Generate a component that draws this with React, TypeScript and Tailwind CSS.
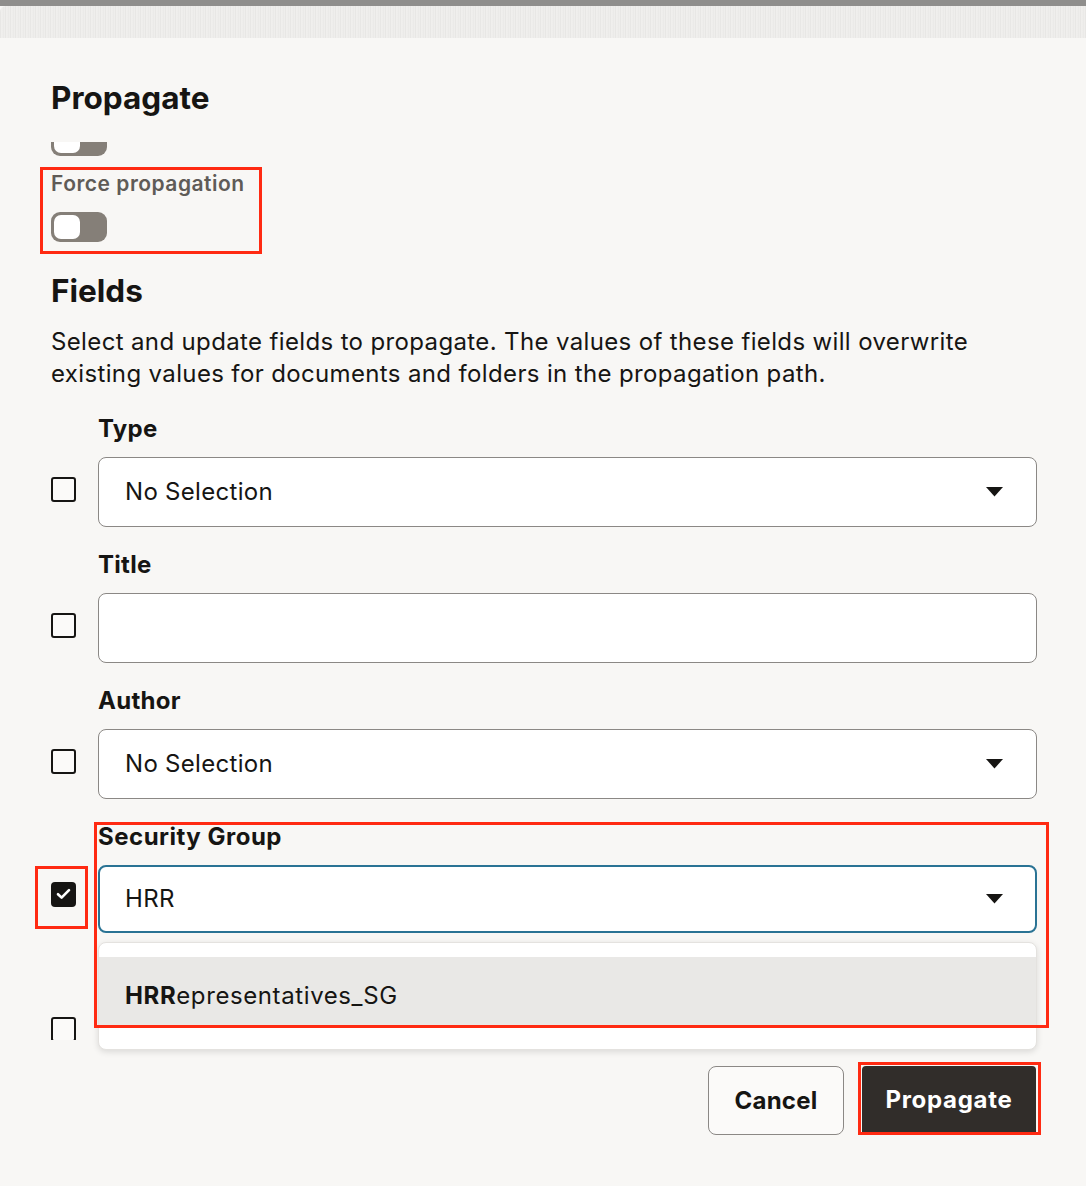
import { useState } from "react";

const fieldRows = [
  { label: "Type", kind: "select", value: "No Selection" },
  { label: "Title", kind: "input", value: "" },
  { label: "Author", kind: "select", value: "No Selection" },
];

function Toggle() {
  return (
    <div className="w-[56px] h-[30px] rounded-[9px] bg-[#857f78] p-[3px] flex items-center">
      <div className="w-[26px] h-[24px] rounded-[7px] bg-white" />
    </div>
  );
}

function Caret() {
  return (
    <svg width="17" height="10" viewBox="0 0 17 10" className="shrink-0">
      <path d="M0 0 H17 L8.5 9.5 Z" fill="#161513" />
    </svg>
  );
}

function Checkbox({ checked = false }: { checked?: boolean }) {
  if (checked) {
    return (
      <div className="w-[25px] h-[25px] rounded-[4px] bg-[#161513] flex items-center justify-center">
        <svg width="15" height="12" viewBox="0 0 15 12">
          <path d="M2 6.2 L5.6 9.6 L13 2.2" fill="none" stroke="white" strokeWidth="2.6" strokeLinecap="round" strokeLinejoin="round" />
        </svg>
      </div>
    );
  }
  return <div className="w-[25px] h-[25px] rounded-[3px] border-2 border-[#161513] bg-[#fbfaf9]" />;
}

export default function App() {
  const [checked] = useState(true);

  return (
    <div className="relative w-[1086px] h-[1186px] overflow-hidden bg-[#f8f7f5] text-[#161513] font-['Inter','Noto_Sans',sans-serif]">
      {/* window chrome */}
      <div className="h-[6px] bg-[#8f8e8c]" />
      <div className="h-[32px] rounded-tl-[6px] bg-[repeating-linear-gradient(90deg,#e4e3e1_0px,#f4f3f1_2px,#e9e8e6_3px,#f1f0ee_5px)]" />

      {/* header */}
      <div className="h-[104px] px-[51px] pt-[42px]">
        <h1 className="text-[31.5px] leading-[36px] font-bold">Propagate</h1>
      </div>

      {/* scrolling body */}
      <div className="h-[898px] overflow-hidden px-[51px]">
        <div className="-mt-[16px]">
          <Toggle />
          <div className="mt-[14px] text-[21px] leading-[28px] font-semibold text-[#5f5b57] tracking-[0.5px]">
            Force propagation
          </div>
          <div className="mt-[14px]">
            <Toggle />
          </div>

          <h2 className="mt-[31px] text-[31.5px] leading-[36px] font-bold">Fields</h2>
          <p className="mt-[17px] text-[24px] leading-[32px] w-[960px] tracking-[0.36px]">
            Select and update fields to propagate. The values of these fields will overwrite existing values for documents and folders in the propagation path.
          </p>

          <div className="mt-[23px] flex flex-col gap-[22px]">
            {fieldRows.map((row) => (
              <div key={row.label} className="grid grid-cols-[47px_939px] gap-y-[12px]">
                <div />
                <div className="text-[24px] leading-[32px] font-bold tracking-[0.3px]">{row.label}</div>
                <div className="flex items-center -mt-[6px]">
                  <Checkbox />
                </div>
                <div className="h-[70px] rounded-[8px] border border-[#8b8885] bg-white flex items-center justify-between pl-[26px] pr-[33px]">
                  <span className="text-[24px] tracking-[0.3px]">{row.value}</span>
                  {row.kind === "select" && <Caret />}
                </div>
              </div>
            ))}

            <div className="grid grid-cols-[47px_939px] gap-y-[12px]">
              <div />
              <div className="text-[24px] leading-[32px] font-bold tracking-[0.5px]">Security Group</div>
              <div className="flex items-center -mt-[10px]">
                <Checkbox checked={checked} />
              </div>
              <div className="h-[68px] rounded-[8px] border-2 border-[#2a7394] bg-white flex items-center justify-between pl-[25px] pr-[32px]">
                <span className="text-[24px] tracking-[0.3px]">HRR</span>
                <Caret />
              </div>
            </div>

            {/* next row, hidden under the open list */}
            <div className="grid grid-cols-[47px_939px] gap-y-[12px]">
              <div />
              <div className="h-[32px]" />
              <div className="flex items-center -mt-[10px]">
                <Checkbox />
              </div>
              <div className="h-[70px] rounded-[8px] border border-[#8b8885] bg-white" />
            </div>
          </div>
        </div>
      </div>

      {/* footer */}
      <div className="flex justify-end gap-[18px] pt-[26px] pr-[50px]">
        <button className="w-[136px] h-[69px] rounded-[8px] border border-[#8b8885] bg-[#fbfaf9] text-[24px] font-bold tracking-[0.2px]">
          Cancel
        </button>
        <button className="w-[174px] h-[67px] rounded-[4px] bg-[#312d2a] text-white text-[24px] font-bold tracking-[0.7px] shadow-[0_2px_0_#1f1c1a]">
          Propagate
        </button>
      </div>

      {/* open dropdown list */}
      <div className="absolute left-[98px] top-[942px] w-[939px] h-[108px] rounded-[8px] bg-white border border-[#e4e2df] shadow-[0_2px_6px_rgba(0,0,0,0.12)] pt-[14px]">
        <div className="h-[68px] bg-[#e9e8e6] flex items-center pl-[26px] pt-[10px] text-[24px] tracking-[0.6px]">
          <span className="font-bold">HRR</span>
          <span>epresentatives_SG</span>
        </div>
      </div>

      {/* annotation boxes */}
      <div className="absolute left-[40px] top-[167px] w-[222px] h-[87px] border-[3px] border-[#ff2a12]" />
      <div className="absolute left-[35px] top-[866px] w-[53px] h-[63px] border-[3px] border-[#ff2a12]" />
      <div className="absolute left-[94px] top-[822px] w-[955px] h-[206px] border-[3px] border-[#ff2a12]" />
      <div className="absolute left-[858px] top-[1062px] w-[183px] h-[73px] border-[3px] border-[#ff2a12]" />
    </div>
  );
}
